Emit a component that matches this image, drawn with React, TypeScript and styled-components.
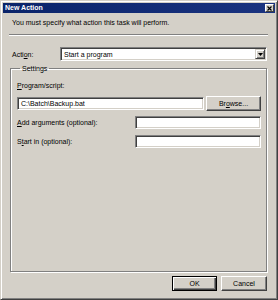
import React from 'react';
import styled, { createGlobalStyle } from 'styled-components';

const GlobalStyle = createGlobalStyle`
  html, body {
    margin: 0;
    padding: 0;
    background: #d4d0c8;
  }
  body {
    font-family: "Liberation Sans", Arial, sans-serif;
    font-size: 7px;
    color: #000;
  }
`;

const Window = styled.div`
  width: 278px;
  height: 300px;
  box-sizing: border-box;
  background: #d4d0c8;
  border: 1px solid;
  border-color: #d4d0c8 #404040 #404040 #d4d0c8;
  box-shadow: inset 1px 1px #fff, inset -1px -1px #808080;
  padding: 2px;
  display: flex;
  flex-direction: column;
`;

const TitleBar = styled.div`
  height: 10px;
  background: linear-gradient(90deg, #0a246a, #1a3380);
  display: flex;
  align-items: center;
  justify-content: space-between;
  padding: 0 1px 0 2px;
`;

const Title = styled.span`
  color: #fff;
  font-weight: bold;
  font-size: 7px;
  line-height: 10px;
`;

const CloseBox = styled.div`
  width: 9px;
  height: 8px;
  box-sizing: border-box;
  background: #d4d0c8;
  border: 1px solid;
  border-color: #fff #404040 #404040 #fff;
  display: flex;
  align-items: center;
  justify-content: center;
`;

const Content = styled.div`
  flex: 1;
  display: flex;
  flex-direction: column;
  padding: 0 8px 0 7px;
`;

const Intro = styled.div`
  margin-top: 5px;
  padding-left: 2px;
  line-height: 9px;
`;

const Separator = styled.div`
  margin: 7px -1px 0;
  height: 0;
  border-top: 1px solid #808080;
  border-bottom: 1px solid #fff;
`;

const Row = styled.div<{ $top: number; $labelWidth: number }>`
  display: grid;
  grid-template-columns: ${(p) => p.$labelWidth}px 1fr;
  align-items: center;
  margin-top: ${(p) => p.$top}px;
`;

const Label = styled.span`
  padding-left: 2px;
  line-height: 9px;
  white-space: nowrap;
`;

const FieldLabel = styled.div<{ $top: number }>`
  margin-top: ${(p) => p.$top}px;
  line-height: 9px;
  white-space: nowrap;
`;

const Key = styled.span`
  text-decoration: underline;
`;

const sunken = `
  box-sizing: border-box;
  background: #fff;
  border: 1px solid;
  border-color: #808080 #fff #fff #808080;
  box-shadow: inset 1px 1px #404040, inset -1px -1px #d4d0c8;
`;

const Select = styled.div`
  ${sunken}
  height: 14px;
  display: flex;
  align-items: center;
  justify-content: space-between;
  padding: 0 1px 0 3px;
`;

const SelectArrow = styled.div`
  width: 10px;
  height: 10px;
  box-sizing: border-box;
  background: #d4d0c8;
  border: 1px solid;
  border-color: #d4d0c8 #404040 #404040 #d4d0c8;
  box-shadow: inset 1px 1px #fff, inset -1px -1px #808080;
  display: flex;
  align-items: center;
  justify-content: center;
`;

const Group = styled.fieldset`
  margin: 3px 0 0;
  padding: 0 5px 0 6px;
  height: 208px;
  box-sizing: border-box;
  border: 1px solid #808080;
  box-shadow: 1px 1px 0 #fff, inset 1px 1px 0 #fff;
  min-width: 0;
`;

const Legend = styled.legend`
  margin-left: 3px;
  padding: 0 2px;
  line-height: 9px;
  color: #000;
`;

const Field = styled.div<{ $width: number }>`
  ${sunken}
  height: 13px;
  width: ${(p) => p.$width}px;
  display: flex;
  align-items: center;
  padding-left: 3px;
  line-height: 9px;
`;

const FileRow = styled.div`
  margin-top: 6px;
  display: flex;
  align-items: center;
  justify-content: space-between;
`;

const ArgRow = styled.div<{ $top: number }>`
  margin-top: ${(p) => p.$top}px;
  display: flex;
  align-items: center;
  justify-content: space-between;
  margin-left: -2px;
`;

const Button = styled.button<{ $default?: boolean; $width: number }>`
  width: ${(p) => p.$width}px;
  height: 15px;
  box-sizing: border-box;
  padding: 0;
  margin: 0;
  font-family: inherit;
  font-size: 7px;
  color: #000;
  background: #d4d0c8;
  border: 1px solid;
  border-color: ${(p) => (p.$default ? '#000' : '#fff #404040 #404040 #fff')};
  box-shadow: ${(p) =>
    p.$default
      ? 'inset 1px 1px #fff, inset -1px -1px #404040, inset -2px -2px #808080'
      : 'inset -1px -1px #808080'};
`;

const Footer = styled.div`
  margin-top: 4px;
  display: flex;
  justify-content: flex-end;
  gap: 4px;
`;

function App() {
  return (
    <>
      <GlobalStyle />
      <Window>
        <TitleBar>
          <Title>New Action</Title>
          <CloseBox>
            <svg width="5" height="5" viewBox="0 0 5 5">
              <path d="M0.5 0.5L4.5 4.5M4.5 0.5L0.5 4.5" stroke="#000" strokeWidth="1.2" />
            </svg>
          </CloseBox>
        </TitleBar>
        <Content>
          <Intro>You must specify what action this task will perform.</Intro>
          <Separator />
          <Row $top={11} $labelWidth={50}>
            <Label>
              Acti<Key>o</Key>n:
            </Label>
            <Select>
              <span>Start a program</span>
              <SelectArrow>
                <svg width="5" height="3" viewBox="0 0 5 3">
                  <path d="M0 0H5L2.5 3Z" fill="#000" />
                </svg>
              </SelectArrow>
            </Select>
          </Row>
          <Group>
            <Legend>Settings</Legend>
            <FieldLabel $top={8}>
              <Key>P</Key>rogram/script:
            </FieldLabel>
            <FileRow>
              <Field $width={187}>C:\Batch\Backup.bat</Field>
              <Button $width={55}>
                Br<Key>o</Key>wse...
              </Button>
            </FileRow>
            <ArgRow $top={5}>
              <Label>
                <Key>A</Key>dd arguments (optional):
              </Label>
              <Field $width={126} />
            </ArgRow>
            <ArgRow $top={6}>
              <Label>
                S<Key>t</Key>art in (optional):
              </Label>
              <Field $width={126} />
            </ArgRow>
          </Group>
          <Footer>
            <Button $default $width={45}>
              OK
            </Button>
            <Button $width={46}>Cancel</Button>
          </Footer>
        </Content>
      </Window>
    </>
  );
}

export default App;
